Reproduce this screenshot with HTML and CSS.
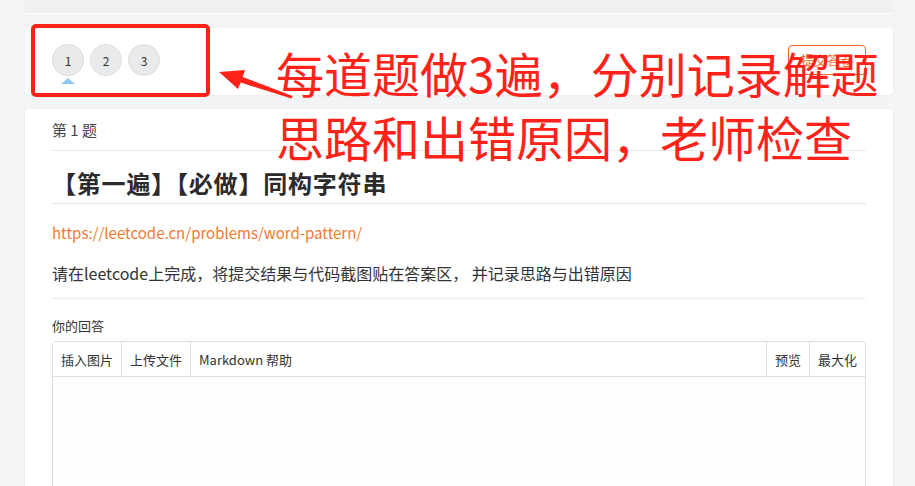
FILE: index.html
```html
<!DOCTYPE html>
<html lang="zh-CN">

<head>
    <meta charset="UTF-8">
    <meta name="viewport" content="width=device-width, initial-scale=1.0">
    <title>作业答题</title>
    <link rel="stylesheet" href="styles.css">
</head>

<body>
    <div class="page">
        <div class="prev-card"></div>

        <div class="card nav-card">
            <div class="steps">
                <span class="step active">1</span>
                <span class="step">2</span>
                <span class="step">3</span>
            </div>
            <button class="submit-btn">提交答卷</button>
        </div>

        <div class="card question">
            <div class="q-no">第 1 题</div>
            <h2 class="q-title">【第一遍】【必做】同构字符串</h2>
            <div class="q-body">
                <p><a class="q-link" href="#">https://leetcode.cn/problems/word-pattern/</a></p>
                <p class="q-desc">请在leetcode上完成，将提交结果与代码截图贴在答案区， 并记录思路与出错原因</p>
            </div>

            <div class="answer-label">你的回答</div>
            <div class="editor">
                <div class="toolbar">
                    <span class="tool">插入图片</span>
                    <span class="tool">上传文件</span>
                    <span class="tool tool-last">Markdown 帮助</span>
                    <span class="spacer"></span>
                    <span class="tool tool-right">预览</span>
                    <span class="tool tool-right">最大化</span>
                </div>
                <div class="editor-area"></div>
            </div>
        </div>

        <!-- 标注 -->
        <div class="mark-box"></div>
        <svg class="mark-arrow" width="915" height="486" viewBox="0 0 915 486">
            <polygon points="219,72 245,70 242.7,77 292.5,96 291.5,98.5 240.7,82.6 238,89" fill="#ff2219" />
        </svg>
        <div class="mark-text">每道题做3遍，分别记录解题<br>思路和出错原因，老师检查</div>
    </div>
</body>

</html>
```

FILE: styles.css
```css
body {
    margin: 0;
    padding: 0;
    background-color: #f3f4f6;
    font-family: "Noto Sans CJK SC", "Noto Sans", sans-serif;
    color: #333;
    height: 486px;
    overflow: hidden;
}

.page {
    position: relative;
    padding: 0 22px 0 25px;
}

.prev-card {
    height: 13px;
    background-color: #eef0f2;
    border-bottom: 1px solid #fff;
    margin-bottom: 14px;
}

.card {
    background-color: #fff;
    border-radius: 4px;
    box-shadow: 0 1px 3px rgba(0, 0, 0, 0.04);
}

.nav-card {
    height: 67px;
    padding: 0 27px;
    display: flex;
    align-items: center;
    justify-content: space-between;
    margin-bottom: 14px;
}

.steps {
    display: flex;
    gap: 6px;
    margin-top: -3px;
}

.step {
    position: relative;
    width: 30px;
    height: 30px;
    border-radius: 50%;
    border: 1px solid #dadce1;
    background-color: #e9eaec;
    font-size: 12px;
    display: flex;
    align-items: center;
    justify-content: center;
    color: #333;
}

.step.active::after {
    content: "";
    position: absolute;
    left: 8px;
    bottom: -9px;
    border-left: 7px solid transparent;
    border-right: 7px solid transparent;
    border-bottom: 6px solid #8ccaf2;
}

.submit-btn {
    width: 78px;
    height: 30px;
    margin-top: -4px;
    border: 1px solid #f06a2a;
    border-radius: 4px;
    background-color: #fff;
    color: #f06a2a;
    font-family: inherit;
    font-size: 13px;
}

.question {
    padding: 0 27px;
    min-height: 380px;
}

.q-no {
    font-size: 15px;
    line-height: 20px;
    padding: 11px 0 10px;
    color: #444;
    border-bottom: 1px solid #eaebee;
}

.q-title {
    margin: 0;
    font-size: 24px;
    line-height: 30px;
    font-weight: bold;
    letter-spacing: 0.8px;
    color: #2b2b2b;
    padding: 17px 0 5px;
    border-bottom: 1px solid #e3e4e8;
}

.q-body {
    padding: 19px 0 14px;
    border-bottom: 1px solid #eaebee;
}

.q-body p {
    margin: 0 0 19px;
    font-size: 15px;
    line-height: 20px;
}

.q-body .q-desc {
    margin-bottom: 0;
    font-size: 16px;
    line-height: 22px;
}

.q-link {
    color: #f17a34;
    text-decoration: none;
}

.answer-label {
    font-size: 13px;
    line-height: 18px;
    padding: 18px 0 6px;
}

.editor {
    border: 1px solid #dcdde6;
    border-radius: 4px;
}

.toolbar {
    display: flex;
    height: 34px;
    border-bottom: 1px solid #dcdde6;
    font-size: 13px;
}

.tool {
    display: flex;
    align-items: center;
    padding: 0 8px;
    border-right: 1px solid #dcdde6;
}

.tool-last {
    border-right: none;
}

.tool-right {
    border-right: none;
    border-left: 1px solid #dcdde6;
}

.spacer {
    flex: 1;
}

.editor-area {
    height: 130px;
    background-color: #fdfdfb;
}

.mark-box {
    position: absolute;
    left: 31px;
    top: 24px;
    width: 171px;
    height: 65px;
    border: 4px solid #ff2219;
    border-radius: 5px;
}

.mark-arrow {
    position: absolute;
    left: 0;
    top: 0;
}

.mark-text {
    position: absolute;
    left: 276px;
    top: 40px;
    font-size: 48px;
    line-height: 64px;
    color: #ff2219;
    white-space: nowrap;
}
```
